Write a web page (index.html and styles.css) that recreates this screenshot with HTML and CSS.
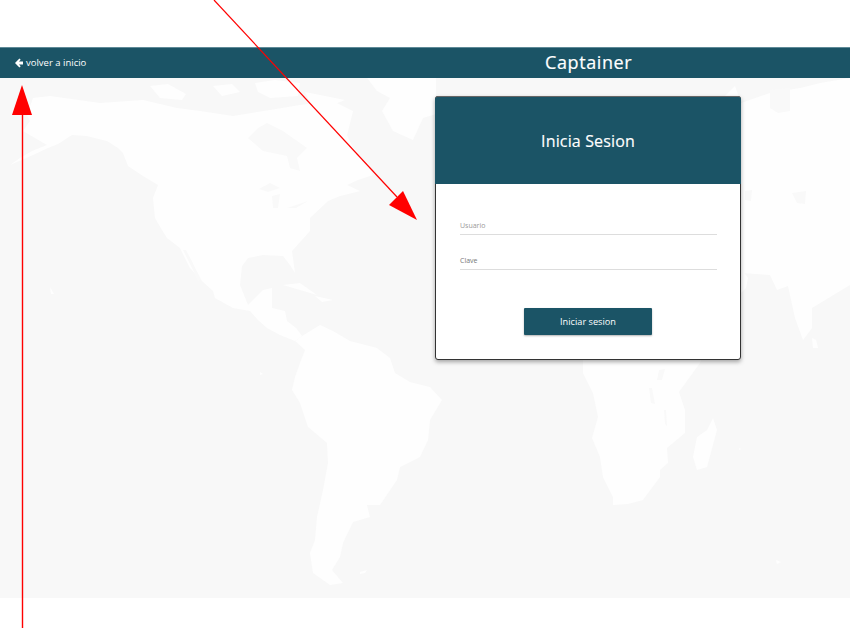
FILE: index.html
```html
<!DOCTYPE html>
<html>
<head>
  <title>Captainer</title>
  <link rel="stylesheet" href="styles.css">
</head>
<body>
  <header class="topbar">
    <a class="back-link" href="#">
      <svg class="back-icon" viewBox="0 0 8 10"><path d="M4.4.4 5.7 1.8 3.9 3.5H8V6.5H3.9L5.7 8.2 4.4 9.6 0 5z"/></svg>
      <span>volver a inicio</span>
    </a>
    <h1 class="brand">Captainer</h1>
  </header>

  <main class="map-area">
    <svg class="world-map" viewBox="0 0 850 520">
      <!-- north and central america -->
      <path d="M10 87 33 77 48 70 58 66 72 57 87 58 107 63 118 70 123 75 128 88 143 98 158 107 153 120 155 140 162 152 167 160 180 170 186 182 190 190 202 203 213 213 215 220 233 230 250 233 258 242 267 250 280 257 295 263 302 258 296 250 287 243 285 233 272 230 272 210 263 212 252 223 248 227 240 207 242 188 248 180 263 177 283 178 290 187 295 195 292 173 310 153 310 140 328 123 340 118 360 113 347 107 358 102 373 97 367 85 353 70 347 57 353 33 333 23 300 27 270 32 233 38 200 33 177 30 143 22 100 25 50 18 33 20 27 37 30 43 23 53 47 67 32 73 20 80z"/>
      <!-- hudson bay and lakes -->
      <path class="water" d="M248 60 258 50 267 45 283 53 307 70 297 80 300 93 290 90 287 78 263 73z"/>
      <path class="water" d="M259 111 270 105 280 110 268 114z"/>
      <path class="water" d="M272 118 280 116 278 130 273 130z"/>
      <path class="water" d="M287 130 308 123 296 130z"/>
      <path class="water" d="M183 172 186 172 202 203 198 202z"/>
      <!-- arctic islands -->
      <path d="M150 8 168 6 186 16 182 22 160 20z"/>
      <path d="M213 8 232 6 240 14 222 18z"/>
      <path d="M255 5 275 2 300 5 298 18 270 20 258 14z"/>
      <path d="M305 14 325 18 345 22 335 26 310 26z"/>
      <!-- greenland -->
      <path d="M367 0 377 13 390 20 382 33 393 53 413 62 423 40 436 36 436 0z"/>
      <!-- south america -->
      <path d="M295 263 302 258 320 247 333 253 350 263 377 270 390 280 395 295 410 304 430 309 442 322 430 342 428 362 420 379 400 389 397 402 380 427 367 427 370 439 353 444 343 465 340 479 332 492 343 505 330 507 313 495 310 475 315 462 317 439 323 412 328 385 327 365 308 349 300 325 292 312 295 299 300 285 305 272z"/>
      <path d="M583 270 583 295 593 315 598 339 592 360 600 379 603 399 613 419 613 427 628 426 643 422 660 399 660 392 668 385 667 370 685 355 685 332 679 314 700 285 704 270z"/>
      <path class="water" d="M659 292 665 291 662 302 657 302z"/>
      <path class="water" d="M649 310 652 310 655 326 651 325z"/>
      <path class="water" d="M664 332 666 332 667 348 665 346z"/>
      <!-- madagascar -->
      <path d="M713 340 717 352 707 389 697 392 693 379 697 359 707 352z"/>
      <!-- asia, with arabia's tip beside the card -->
      <path d="M725 18 735 8 741 25 770 15 800 10 820 5 850 0 850 207 840 213 812 230 812 250 803 262 795 240 788 208 777 212 770 197 741 195 725 190z"/>
      <path d="M741 190 748 200 746 210 741 215z"/>
      <path class="water" d="M745 113 752 112 751 123 745 122z"/>
      <path class="water" d="M792 115 806 113 805 126 797 125z"/>
      <path class="water" d="M770 12 790 10 790 33 778 35 770 30z"/>
      <!-- small islands -->
      <path d="M812 260 816 262 818 270 813 270z"/>
      <path d="M283 207 300 205 317 217 300 212z"/>
      <path d="M315 218 333 222 322 224z"/>
      <path d="M360 494 367 492 365 495 360 496z"/>
      <path d="M776 482 781 484 777 486z"/>
      <path d="M739 370 741 371 739 372z"/>
      <path d="M260 294 263 296 260 297z"/>
      <path d="M50 209 54 216 51 216z"/>
    </svg>

    <section class="login-card">
      <div class="login-head">
        <h2>Inicia Sesion</h2>
      </div>
      <form class="login-form">
        <div class="field field-user">Usuario</div>
        <div class="field">Clave</div>
        <button type="button" class="login-btn">Iniciar sesion</button>
      </form>
    </section>
  </main>

  <!-- red arrows drawn on top of the screenshot -->
  <svg class="arrows" width="850" height="630" viewBox="0 0 850 630">
    <line x1="22.5" y1="628" x2="22.5" y2="113" stroke="#ff0000" stroke-width="1.4"/>
    <polygon points="22,85 12,115 32,115" fill="#ff0000"/>
    <line x1="214" y1="0" x2="397" y2="197" stroke="#ff0000" stroke-width="1.2"/>
    <polygon points="417,220 389,205 403,191" fill="#ff0000"/>
  </svg>
</body>
</html>
```

FILE: styles.css
```css
body {
  margin: 0;
  padding: 47px 0 0;
  height: 583px;
  overflow: hidden;
  position: relative;
  background-color: #fff;
  font-family: "Open Sans", Arial, sans-serif;
}

.topbar {
  display: grid;
  grid-template-columns: 1fr 1fr;
  height: 31px;
  box-sizing: border-box;
  background-color: #1b5466;
  border-top: 1px solid #5f8a97;
  color: #fff;
}

.back-link {
  display: flex;
  align-items: center;
  gap: 3px;
  padding: 0 0 1px 15px;
  color: #fff;
  font-size: 9.5px;
  text-decoration: none;
}

.back-icon {
  width: 8px;
  height: 10px;
  fill: #fff;
}

.brand {
  grid-column: 2;
  margin: 0;
  padding-left: 120px;
  font-size: 18px;
  font-weight: 400;
  line-height: 29px;
  letter-spacing: 0.6px;
  -webkit-text-stroke: 0.2px #fff;
}

.map-area {
  position: relative;
  height: 520px;
  padding: 18px 0 0 435px;
  box-sizing: border-box;
  background-color: #f8f8f8;
}

.world-map {
  position: absolute;
  top: 0;
  left: 0;
  width: 100%;
  height: 100%;
  fill: #fefefe;
}

.world-map .water {
  fill: #f9f9f9;
}

.login-card {
  position: relative;
  width: 306px;
  height: 264px;
  box-sizing: border-box;
  background-color: #fff;
  border: 1px solid #333;
  border-radius: 3px;
  box-shadow: 0 2px 4px rgba(0, 0, 0, 0.35);
}

.login-head {
  display: flex;
  align-items: center;
  justify-content: center;
  height: 88px;
  margin: -1px -1px 0;
  box-sizing: border-box;
  background-color: #1b5466;
  border-top: 1px solid #666;
  border-radius: 3px 3px 0 0;
  color: #fff;
}

.login-head h2 {
  margin: 0;
  font-size: 16px;
  font-weight: 400;
  letter-spacing: 0.15px;
  -webkit-text-stroke: 0.15px #fff;
}

.login-form {
  display: flex;
  flex-direction: column;
  padding: 36px 23px 0 24px;
}

.field {
  height: 14px;
  margin-bottom: 20px;
  border-bottom: 1px solid #ddd;
  color: #777;
  font-size: 7px;
  line-height: 11px;
}

.field-user {
  color: #999;
}

.login-btn {
  align-self: center;
  width: 128px;
  height: 27px;
  margin: 18px 1px 0 0;
  padding: 0;
  font-family: inherit;
  font-size: 9.2px;
  color: #fff;
  background-color: #1b5466;
  border: none;
  border-radius: 1px;
  box-shadow: 0 1px 2px rgba(0, 0, 0, 0.3);
}

.arrows {
  position: absolute;
  top: 0;
  left: 0;
}
```
